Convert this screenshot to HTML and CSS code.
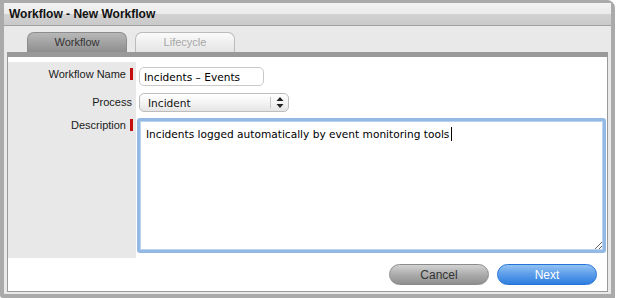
FILE: index.html
```html
<!DOCTYPE html>
<html lang="en">
<head>
    <meta charset="UTF-8">
    <title>Workflow - New Workflow</title>
    <link rel="stylesheet" href="styles.css">
</head>
<body>
    <div class="window">
        <div class="titlebar">Workflow - New Workflow</div>
        <div class="tabs">
            <div class="tab active">Workflow</div>
            <div class="tab">Lifecycle</div>
        </div>
        <div class="panel">
            <div class="form">
                <div class="label req"><span>Workflow Name</span><i class="marker"></i></div>
                <div class="field row1"><input type="text" class="text-input" value="Incidents – Events"></div>

                <div class="label"><span>Process</span></div>
                <div class="field row2">
                    <div class="select-wrap">
                        <select class="select">
                            <option>Incident</option>
                            <option>Request</option>
                            <option>Problem</option>
                        </select>
                        <svg class="select-arrows" width="8" height="11" viewBox="0 0 8 11">
                            <path d="M4 0 L7.5 4 L0.5 4 Z M4 11 L7.5 7 L0.5 7 Z" fill="#222"/>
                        </svg>
                    </div>
                </div>

                <div class="label req row3"><span>Description</span><i class="marker"></i></div>
                <div class="field row3">
                    <div class="textarea-wrap">
                        <textarea class="textarea">Incidents logged automatically by event monitoring tools</textarea>
                        <!-- text caret shown at end of the focused text -->
                        <i class="caret"></i>
                    </div>
                </div>
            </div>
            <div class="actions">
                <button class="btn cancel">Cancel</button>
                <button class="btn next">Next</button>
            </div>
        </div>
    </div>
</body>
</html>
```

FILE: styles.css
```css
body {
    margin: 0;
    padding: 0;
    background-color: #fff;
    font-family: "Liberation Sans", Arial, sans-serif;
}

.window {
    width: 615px;
    height: 298px;
    box-sizing: border-box;
    border: 4px solid #aaa;
    border-top-width: 3px;
    border-top-right-radius: 8px;
    border-bottom-left-radius: 3px;
    background-color: #e9e9e9;
}

.titlebar {
    height: 22px;
    padding-left: 5px;
    line-height: 22px;
    font-size: 12px;
    font-weight: bold;
    color: #111;
    border-bottom: 1px solid #a0a0a0;
    background: linear-gradient(#f3f3f3, #ebebeb 50%, #d2d2d2 52%, #c9c9c9);
}

.tabs {
    display: flex;
    gap: 8px;
    padding: 6px 0 0 23px;
}

.tab {
    width: 100px;
    height: 20px;
    box-sizing: border-box;
    border: 1px solid #bbb;
    border-bottom: none;
    border-radius: 7px 7px 0 0;
    text-align: center;
    line-height: 19px;
    font-size: 11px;
    color: #a6a6a6;
    background: linear-gradient(#fbfbfb, #e4e4e4);
}

.tab.active {
    border-color: #8c8c8c;
    color: #333;
    background: linear-gradient(#b8b8b8, #8e8e8e);
}

.panel {
    margin: 0 3px 1px 3px;
    border: 1px solid #999;
    border-top: 5px solid #999;
    background-color: #fff;
    padding-top: 5px;
}

.form {
    display: grid;
    grid-template-columns: 128px 1fr;
}

.label {
    display: flex;
    justify-content: flex-end;
    align-items: flex-start;
    gap: 4px;
    padding: 6px 4px 0 0;
    background-color: #e8e8e8;
    font-size: 11px;
    line-height: 12px;
    color: #1a1a1a;
}

.label.req {
    padding-right: 3px;
}

.label.row3 {
    padding-top: 1px;
}

.marker {
    display: block;
    width: 3px;
    height: 12px;
    background-color: #c40d0d;
}

.field {
    padding-left: 3px;
}

.row1 {
    padding-top: 5px;
    padding-bottom: 4px;
}

.row2 {
    padding-top: 3px;
    padding-bottom: 6px;
}

.field.row3 {
    padding-left: 1px;
    padding-bottom: 5px;
}

.text-input {
    display: block;
    width: 125px;
    height: 19px;
    box-sizing: border-box;
    margin: 0;
    padding: 0 0 0 4px;
    border: 1px solid #c9c9c9;
    border-radius: 5px;
    font-family: "DejaVu Sans", sans-serif;
    font-size: 10.6px;
    color: #000;
    outline: none;
}

.select-wrap {
    position: relative;
    width: 150px;
    height: 19px;
}

.select {
    display: block;
    width: 150px;
    height: 19px;
    box-sizing: border-box;
    margin: 0;
    padding: 0 0 0 8px;
    border: 1px solid #bdbdbd;
    border-radius: 5px;
    appearance: none;
    -webkit-appearance: none;
    font-family: "DejaVu Sans", sans-serif;
    font-size: 10.6px;
    color: #111;
    background: linear-gradient(#ffffff, #f4f4f4 50%, #e4e4e4);
    outline: none;
}

.select-arrows {
    position: absolute;
    right: 5px;
    top: 4px;
    padding-left: 5px;
    border-left: 1px solid #c8c8c8;
    height: 11px;
}

.textarea-wrap {
    position: relative;
    width: 469px;
}

.textarea {
    display: block;
    width: 469px;
    height: 135px;
    box-sizing: border-box;
    margin: 0;
    padding: 5px 6px;
    border: 3px solid #93b9e4;
    border-radius: 3px;
    box-shadow: inset 0 0 0 1px #b9d2ee;
    font-family: "DejaVu Sans", sans-serif;
    font-size: 10.6px;
    line-height: 16px;
    color: #000;
    outline: none;
}

.caret {
    position: absolute;
    left: 314px;
    top: 9px;
    width: 1px;
    height: 14px;
    background-color: #000;
}

.actions {
    display: flex;
    justify-content: flex-end;
    gap: 8px;
    padding: 6px 10px 6px 0;
}

.btn {
    width: 100px;
    height: 21px;
    border-radius: 11px;
    font-family: "Liberation Sans", Arial, sans-serif;
    font-size: 12px;
    cursor: pointer;
}

.btn.cancel {
    border: 1px solid #8b8b8b;
    color: #333;
    background: linear-gradient(#d2d2d2, #a9a9a9 55%, #8f8f8f);
}

.btn.next {
    border: 1px solid #2673d8;
    color: #fff;
    background: linear-gradient(#92c2f4, #5a9ce9 50%, #2f7fe0);
}
```
